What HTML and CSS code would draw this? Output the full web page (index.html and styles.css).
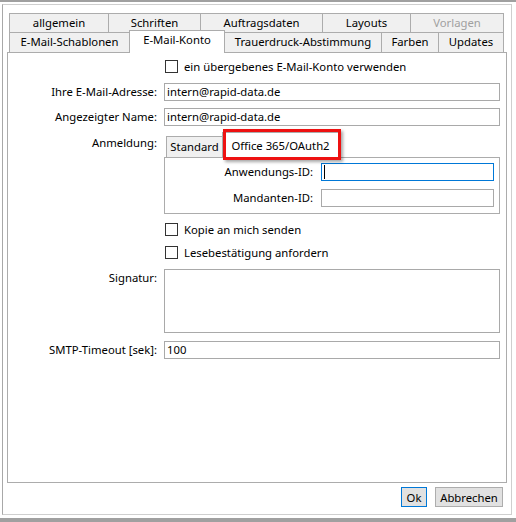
FILE: index.html
```html
<!DOCTYPE html>
<html lang="de">
<head>
  <meta charset="UTF-8" />
  <title>Einstellungen</title>
  <link rel="stylesheet" href="styles.css">
</head>
<body>
  <div class="dialog">
    <div class="tabstrip">
      <div class="tabrow row-back">
        <div class="tab">allgemein</div>
        <div class="tab">Schriften</div>
        <div class="tab">Auftragsdaten</div>
        <div class="tab">Layouts</div>
        <div class="tab disabled">Vorlagen</div>
      </div>
      <div class="tabrow row-front">
        <div class="tab">E-Mail-Schablonen</div>
        <div class="tab active">E-Mail-Konto</div>
        <div class="tab">Trauerdruck-Abstimmung</div>
        <div class="tab">Farben</div>
        <div class="tab">Updates</div>
      </div>
    </div>

    <div class="page">
      <div class="form">
        <div></div>
        <label class="check-row"><span class="check"></span>ein übergebenes E-Mail-Konto verwenden</label>

        <label class="caption" for="adresse">Ihre E-Mail-Adresse:</label>
        <input class="text" type="text" id="adresse" value="intern@rapid-data.de" />

        <label class="caption" for="name">Angezeigter Name:</label>
        <input class="text" type="text" id="name" value="intern@rapid-data.de" />

        <div class="caption top-auth">Anmeldung:</div>
        <div class="auth">
          <div class="auth-tabs">
            <div class="auth-tab">Standard</div>
            <div class="auth-tab active">Office 365/OAuth2<span class="mark"></span></div>
          </div>
          <div class="auth-page">
            <label class="caption" for="app-id">Anwendungs-ID:</label>
            <div class="field">
              <input class="text focus" type="text" id="app-id" />
              <span class="caret"></span>
            </div>
            <label class="caption" for="tenant-id">Mandanten-ID:</label>
            <input class="text" type="text" id="tenant-id" />
          </div>
        </div>

        <div></div>
        <label class="check-row"><span class="check"></span>Kopie an mich senden</label>

        <div></div>
        <label class="check-row"><span class="check"></span>Lesebestätigung anfordern</label>

        <label class="caption top-sig" for="signatur">Signatur:</label>
        <textarea class="text area" id="signatur"></textarea>

        <label class="caption" for="timeout">SMTP-Timeout [sek]:</label>
        <input class="text" type="text" id="timeout" value="100" />
      </div>
    </div>

    <div class="buttons">
      <button class="btn btn-ok">Ok</button>
      <button class="btn btn-cancel">Abbrechen</button>
    </div>
  </div>
</body>
</html>
```

FILE: styles.css
```css
body {
  margin: 0;
  height: 522px;
  box-sizing: border-box;
  border-top: 2px solid #a0a0a0;
  border-bottom: 4px solid #a0a0a0;
  font-family: "Noto Sans", sans-serif;
  font-size: 11.3px;
  color: #000;
  background: #fff;
  overflow: hidden;
}
.dialog {
  margin: 2px 4px 0 2px;
  height: 511px;
  box-sizing: border-box;
  border: 1px solid #cfcfcf;
  border-left-color: #a8a8a8;
  padding: 0 4px;
}

/* Reiter oben, zwei Zeilen */
.tabstrip {
  padding-top: 8px;
  margin-left: 2px;
  width: 495px;
}
.tabrow {
  display: grid;
}
.row-back {
  grid-template-columns: 99px 92px 122px 88px 94px;
  height: 19px;
}
.row-front {
  grid-template-columns: 120px 95px 157px 57px 66px;
  height: 20px;
}
.tab {
  border: 1px solid #acacac;
  border-width: 1px 0 0 1px;
  background: #f0f0f0;
  text-align: center;
  line-height: 17px;
  white-space: nowrap;
}
.row-front .tab {
  line-height: 18px;
}
.tab:last-child {
  border-right-width: 1px;
}
.tab.disabled {
  color: #a0a0a0;
}
.row-front .tab.active {
  background: #fff;
  margin: -2px -1px -1px 0;
  border-right-width: 1px;
  position: relative;
  z-index: 1;
}

.page {
  height: 431px;
  box-sizing: border-box;
  border: 1px solid #acacac;
}

/* Formular */
.form {
  display: grid;
  grid-template-columns: 149px 336px;
  grid-template-rows: 25px 25px 25px 89px 23px 23px 74px 23px;
  column-gap: 7px;
  padding-top: 1px;
  align-items: center;
}
.caption {
  text-align: right;
  white-space: nowrap;
  line-height: 16px;
}
.top-auth {
  align-self: start;
  margin-top: 6px;
}
.top-sig {
  align-self: start;
  margin-top: 6px;
}
.text {
  display: block;
  width: 100%;
  height: 18px;
  box-sizing: border-box;
  margin: 0;
  padding: 0 2px;
  border: 1px solid #a9a9a9;
  border-radius: 0;
  font: inherit;
  color: #000;
  background: #fff;
  outline: none;
}
.text.focus {
  border-color: #0078d7;
}
.text.area {
  height: 64px;
  align-self: start;
  margin-top: 5px;
  resize: none;
}
.field {
  position: relative;
}
.caret {
  position: absolute;
  left: 3px;
  top: 2px;
  width: 1px;
  height: 14px;
  background: #000;
}
.check-row {
  display: flex;
  align-items: center;
  gap: 6px;
  margin-left: 1px;
  white-space: nowrap;
}
.check {
  width: 13px;
  height: 13px;
  box-sizing: border-box;
  border: 1px solid #333;
  background: #fff;
}

/* Anmeldung mit eigenen Reitern */
.auth {
  align-self: start;
}
.auth-tabs {
  display: flex;
  align-items: flex-end;
  height: 28px;
  padding-left: 2px;
}
.auth-tab {
  height: 21px;
  box-sizing: border-box;
  padding: 2px 0 0;
  width: 56px;
  text-align: center;
  line-height: 16px;
  background: #f0f0f0;
  border: 1px solid #acacac;
  border-width: 1px 0 0 1px;
  white-space: nowrap;
}
.auth-tab.active {
  width: 117px;
  height: 26px;
  padding-top: 5px;
  margin-bottom: -1px;
  background: #fff;
  border-right-width: 1px;
  position: relative;
  z-index: 1;
}
.mark {
  position: absolute;
  left: 0;
  top: -4px;
  width: 118px;
  height: 31px;
  box-sizing: border-box;
  border: 3px solid #ee1111;
  box-shadow: 2px 2px 3px rgba(0, 0, 0, 0.35);
}
.auth-page {
  height: 57px;
  box-sizing: border-box;
  border: 1px solid #acacac;
  padding-top: 5px;
  display: grid;
  grid-template-columns: 148px 173px;
  grid-auto-rows: 18px;
  column-gap: 8px;
  row-gap: 8px;
  align-items: center;
}

/* Schaltflächen unten */
.buttons {
  display: flex;
  justify-content: flex-end;
  gap: 8px;
  margin-top: 4px;
  padding-right: 4px;
}
.btn {
  height: 20px;
  padding: 0;
  border: 1px solid #adadad;
  background: #e1e1e1;
  font: inherit;
  color: #000;
}
.btn-ok {
  width: 26px;
  border-color: #0078d7;
}
.btn-cancel {
  width: 68px;
}
```
